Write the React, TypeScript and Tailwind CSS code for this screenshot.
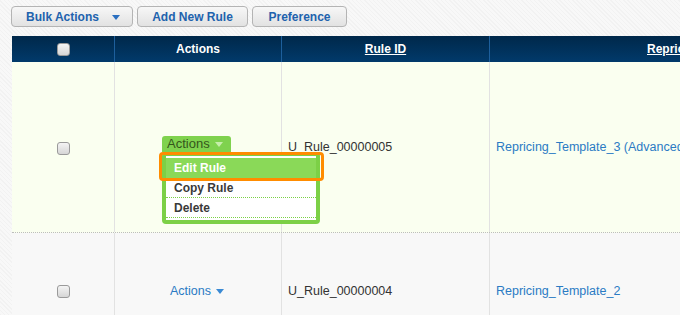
const Checkbox = () => (
	<span className="inline-block w-[13px] h-[13px] rounded-[3px] border border-[#9a9a9a] bg-gradient-to-b from-[#f4f4f4] to-[#d6d6d6]"></span>
);

const Caret = ({ color }: { color: string }) => (
	<svg width="8" height="5" viewBox="0 0 8 5" className="inline-block ml-[5px]">
		<path d="M0 0 L8 0 L4 5 Z" fill={color} />
	</svg>
);

const ToolButton = ({ label, w }: { label: string; w: string }) => (
	<button
		className={`${w} h-[21px] flex items-center justify-center rounded-[4px] border border-[#b4b4b4] bg-gradient-to-b from-[#f7f7f7] to-[#e2e2e2] text-[12px] font-bold text-[#2162ad]`}
	>
		{label}
	</button>
);

const App = () => {
	return (
		<div
			className="w-[680px] h-[315px] overflow-hidden bg-[repeating-linear-gradient(45deg,#f2f2f2_0px,#f2f2f2_1px,#f8f8f8_1px,#f8f8f8_3px)]"
			style={{ fontFamily: '"Liberation Sans", Arial, sans-serif' }}
		>
			<div className="flex gap-1 pl-[11px] pt-[6px] h-[36px]">
				<button className="w-[122px] h-[21px] flex items-center justify-center rounded-[4px] border border-[#b4b4b4] bg-gradient-to-b from-[#f7f7f7] to-[#e2e2e2] text-[12px] font-bold text-[#2162ad] pl-[2px]">
					Bulk Actions
					<span className="ml-[8px]">
						<Caret color="#2a6fc0" />
					</span>
				</button>
				<ToolButton label="Add New Rule" w="w-[111px]" />
				<ToolButton label="Preference" w="w-[95px]" />
			</div>

			<div className="ml-[12px] w-[800px]">
				{/* header */}
				<div className="flex h-[26px] bg-gradient-to-b from-[#00284a] to-[#013a6b] text-white text-[12px] font-bold">
					<div className="w-[103px] flex items-center justify-center border-r border-[#1d5f9c]">
						<Checkbox />
					</div>
					<div className="w-[167px] flex items-center justify-center border-r border-[#1d5f9c]">Actions</div>
					<div className="w-[208px] flex items-center justify-center border-r border-[#1d5f9c]">
						<span className="underline">Rule ID</span>
					</div>
					<div className="flex-1 flex items-center pl-[157px]">
						<span className="underline">Repricing Template</span>
					</div>
				</div>

				{/* row 1 */}
				<div className="flex h-[171px] bg-[#fafff0] border-b border-dotted border-[#bdbdbd] text-[12.5px]">
					<div className="w-[103px] flex items-center justify-center border-r border-[#e2e2e2] pt-[3px]">
						<Checkbox />
					</div>
					<div className="w-[167px] relative border-r border-[#e2e2e2]">
						<div className="absolute left-[47px] top-[74px] w-[69px] h-[16px] rounded-t-[3px] bg-[#7fd24e] flex items-center pl-[5px] text-[#35561c] text-[13px]">
							Actions
							<Caret color="#c6eeaa" />
						</div>
						<div className="absolute left-[47px] top-[90px] w-[158px] h-[72px] rounded-[4px] bg-[#7cd046] p-[4px] text-[12px]">
							<div className="bg-white h-full pt-[2px]">
								<div className="h-[20px] bg-[#8ad958] flex items-center pl-[8px] text-white font-bold">Edit Rule</div>
								<div className="h-[20px] flex items-center pl-[8px] text-[#3a3a3a] font-bold border-b border-dotted border-[#7cd046]">Copy Rule</div>
								<div className="h-[20px] flex items-center pl-[8px] text-[#3a3a3a] font-bold border-b border-dotted border-[#7cd046]">Delete</div>
							</div>
						</div>
						<div className="absolute left-[44px] top-[90px] w-[165px] h-[29px] rounded-[4px] border-[3px] border-[#ff8c00]"></div>
					</div>
					<div className="w-[208px] flex items-center pl-[6px] border-r border-[#e2e2e2] text-[#333]">U_Rule_00000005</div>
					<div className="flex-1 flex items-center pl-[6px] text-[#2b7bc4] whitespace-nowrap">Repricing_Template_3 (Advanced)</div>
				</div>

				{/* row 2 */}
				<div className="flex h-[120px] bg-[#f8f8f8] text-[12.5px]">
					<div className="w-[103px] flex items-center justify-center border-r border-[#e2e2e2] pb-[4px]">
						<Checkbox />
					</div>
					<div className="w-[167px] flex items-center justify-center border-r border-[#e2e2e2] text-[#2b7bc4] pb-[4px] pr-[2px]">
						Actions
						<Caret color="#3b8ad4" />
					</div>
					<div className="w-[208px] flex items-center pl-[6px] border-r border-[#e2e2e2] text-[#333] pb-[4px]">U_Rule_00000004</div>
					<div className="flex-1 flex items-center pl-[6px] text-[#2b7bc4] pb-[4px]">Repricing_Template_2</div>
				</div>
			</div>
		</div>
	);
};

export default App;
